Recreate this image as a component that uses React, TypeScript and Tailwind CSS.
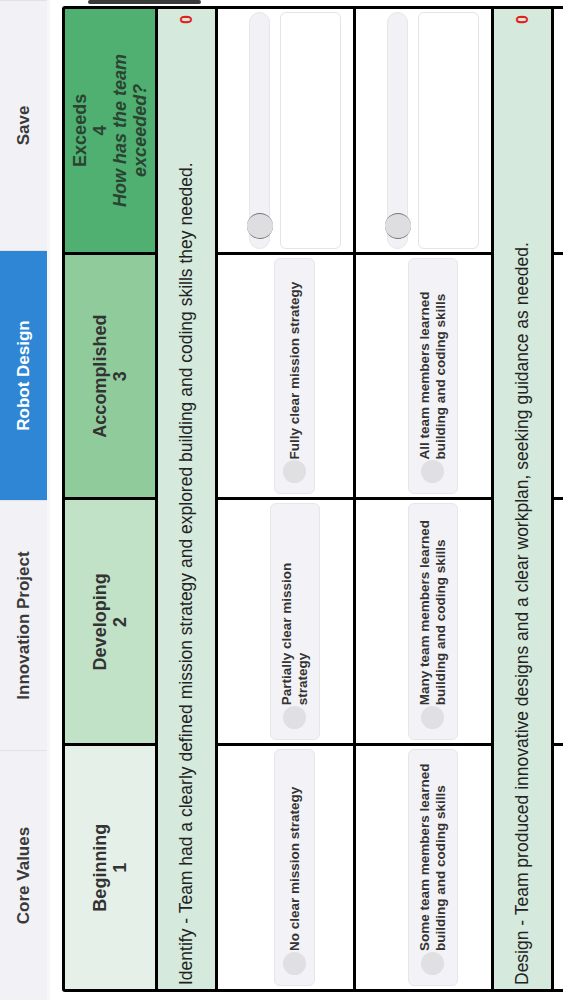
import { ReactNode } from "react";

const FONT = "font-['Liberation_Sans',Arial,Helvetica,sans-serif]";

const TABS = [
  { label: "Core Values", active: false },
  { label: "Innovation Project", active: false },
  { label: "Robot Design", active: true },
  { label: "Save", active: false },
];

interface Level {
  name: string;
  score: string;
  bg: string;
  note?: string;
}

const LEVELS: Level[] = [
  { name: "Beginning", score: "1", bg: "bg-[#e5f1e8]" },
  { name: "Developing", score: "2", bg: "bg-[#c2e2c7]" },
  { name: "Accomplished", score: "3", bg: "bg-[#90cc9b]" },
  { name: "Exceeds", score: "4", bg: "bg-[#4fb072]", note: "How has the team exceeded?" },
];

interface Section {
  title: string;
  rows: string[][];
}

const SECTIONS: Section[] = [
  {
    title:
      "Identify - Team had a clearly defined mission strategy and explored building and coding skills they needed.",
    rows: [
      ["No clear mission strategy", "Partially clear mission strategy", "Fully clear mission strategy"],
      [
        "Some team members learned building and coding skills",
        "Many team members learned building and coding skills",
        "All team members learned building and coding skills",
      ],
    ],
  },
  {
    title: "Design - Team produced innovative designs and a clear workplan, seeking guidance as needed.",
    rows: [["", "", ""]],
  },
];

function Option({ text }: { text: string }) {
  if (!text) return null;
  return (
    <div className="flex w-full items-center gap-[1px] rounded-md border border-[#e6e5ea] bg-[#f3f2f6] py-[8px] pl-[10px] pr-[8px]">
      <span className="h-[23px] w-[23px] shrink-0 rounded-full bg-[#e0e0e2]" />
      <span className="flex-1 text-[13.5px] font-bold leading-[16px] text-[#333]">{text}</span>
    </div>
  );
}

function ExceedsCell() {
  return (
    <div className="flex w-full flex-col gap-[10px]">
      <div className="relative h-[21px] w-full rounded-full border border-[#e6e6ea] bg-[#f2f1f5]">
        <span className="absolute left-[9px] top-[-3px] h-[26px] w-[26px] rounded-full border-x-[1.5px] border-[#777] bg-[#dedee0]" />
      </div>
      <div className="h-[61px] w-full rounded-md border border-[#e4e4e8] bg-white" />
    </div>
  );
}

function Cell({ children }: { children?: ReactNode }) {
  return <div className="flex h-[135px] items-center bg-white px-[3px] pt-[18px]">{children}</div>;
}

export default function App() {
  return (
    <div className={`relative h-[1000px] w-[563px] overflow-hidden bg-white ${FONT}`}>
      <div className="h-[563px] w-[1000px] origin-top-left translate-y-[1000px] -rotate-90 bg-white">
        <div className="flex h-[50px] border-b-[3px] border-[#f7f7f9] bg-[#f2f1f6]">
          {TABS.map((t) => (
            <div
              key={t.label}
              className={`flex w-[250px] items-center justify-center border-r border-[#e2e1e6] text-[17px] font-bold ${
                t.active ? "bg-[#2e86d5] text-white" : "text-[#3a3a3a]"
              }`}
            >
              {t.label}
            </div>
          ))}
        </div>

        <div className="ml-[8px] mr-[6px] mt-[12px] grid grid-cols-4 gap-[3px] rounded-[3px] border-[3px] border-black bg-black">
          {LEVELS.map((l) => (
            <div
              key={l.name}
              className={`flex h-[90px] flex-col items-center justify-center text-center text-[18px] font-bold leading-[20px] ${l.bg} ${
                l.note ? "text-[#2a4431]" : "text-[#333]"
              }`}
            >
              <span>{l.name}</span>
              <span>{l.score}</span>
              {l.note && <span className="w-[170px] italic">{l.note}</span>}
            </div>
          ))}

          {SECTIONS.map((s) => (
            <>
              <div
                key={s.title}
                className="col-span-4 flex h-[57px] items-center justify-between bg-[#d5e9dc] pl-[4px] pr-[6px]"
              >
                <span className="text-[17.5px] text-[#222]">{s.title}</span>
                <span className="text-[16px] font-bold text-[#e3211c]">0</span>
              </div>
              {s.rows.map((r, i) => (
                <>
                  {r.map((o, j) => (
                    <Cell key={`${i}-${j}`}>
                      <Option text={o} />
                    </Cell>
                  ))}
                  <Cell>{r[0] && <ExceedsCell />}</Cell>
                </>
              ))}
            </>
          ))}
        </div>
      </div>

      <span className="absolute left-[88px] top-0 h-[4px] w-[113px] rounded-full bg-[#3a3a3a]" />
    </div>
  );
}
